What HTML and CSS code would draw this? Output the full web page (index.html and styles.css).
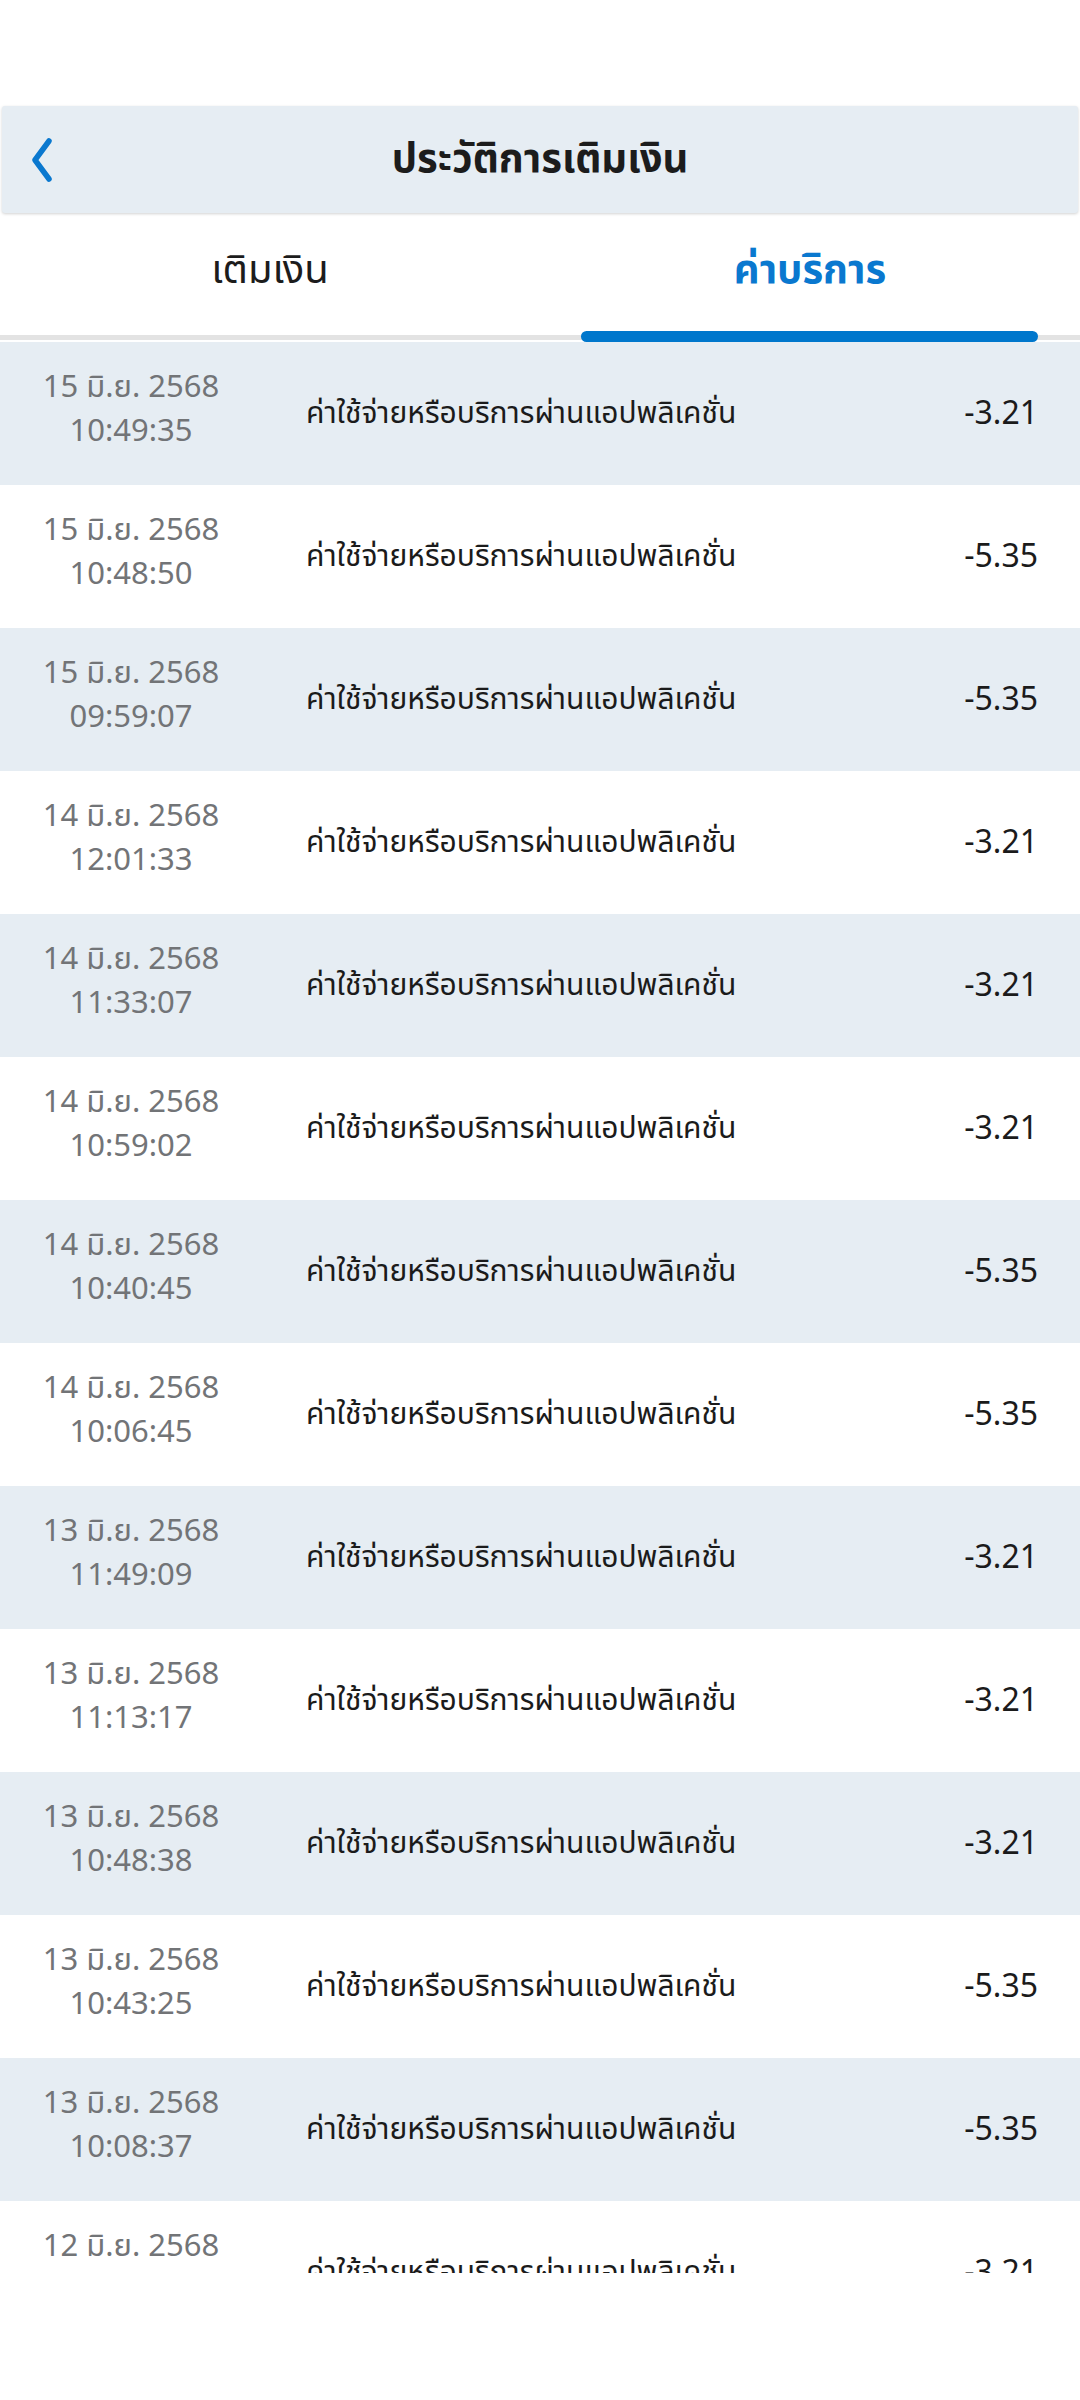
FILE: index.html
```html
<!DOCTYPE html>
<html lang="th">
<head>
<meta charset="utf-8">
<title>ประวัติการเติมเงิน</title>
<link rel="stylesheet" href="styles.css">
</head>
<body>
<div class="screen">
  <div class="statusbar"></div>
  <header class="appbar">
    <button class="back" aria-label="back">
      <svg width="24" height="44" viewBox="0 0 24 44"><path d="M19 3 L5 22 L19 41" fill="none" stroke="#0a78cf" stroke-width="5.5" stroke-linecap="round" stroke-linejoin="round"/></svg>
    </button>
    <h1 class="title">ประวัติการเติมเงิน</h1>
  </header>
  <nav class="tabs">
    <div class="tab">เติมเงิน</div>
    <div class="tab active">ค่าบริการ<span class="indicator"></span></div>
  </nav>
  <div class="list">
    <div class="row alt"><div class="when"><span>15 มิ.ย. 2568</span><span>10:49:35</span></div><div class="desc">ค่าใช้จ่ายหรือบริการผ่านแอปพลิเคชั่น</div><div class="amt">-3.21</div></div>
    <div class="row"><div class="when"><span>15 มิ.ย. 2568</span><span>10:48:50</span></div><div class="desc">ค่าใช้จ่ายหรือบริการผ่านแอปพลิเคชั่น</div><div class="amt">-5.35</div></div>
    <div class="row alt"><div class="when"><span>15 มิ.ย. 2568</span><span>09:59:07</span></div><div class="desc">ค่าใช้จ่ายหรือบริการผ่านแอปพลิเคชั่น</div><div class="amt">-5.35</div></div>
    <div class="row"><div class="when"><span>14 มิ.ย. 2568</span><span>12:01:33</span></div><div class="desc">ค่าใช้จ่ายหรือบริการผ่านแอปพลิเคชั่น</div><div class="amt">-3.21</div></div>
    <div class="row alt"><div class="when"><span>14 มิ.ย. 2568</span><span>11:33:07</span></div><div class="desc">ค่าใช้จ่ายหรือบริการผ่านแอปพลิเคชั่น</div><div class="amt">-3.21</div></div>
    <div class="row"><div class="when"><span>14 มิ.ย. 2568</span><span>10:59:02</span></div><div class="desc">ค่าใช้จ่ายหรือบริการผ่านแอปพลิเคชั่น</div><div class="amt">-3.21</div></div>
    <div class="row alt"><div class="when"><span>14 มิ.ย. 2568</span><span>10:40:45</span></div><div class="desc">ค่าใช้จ่ายหรือบริการผ่านแอปพลิเคชั่น</div><div class="amt">-5.35</div></div>
    <div class="row"><div class="when"><span>14 มิ.ย. 2568</span><span>10:06:45</span></div><div class="desc">ค่าใช้จ่ายหรือบริการผ่านแอปพลิเคชั่น</div><div class="amt">-5.35</div></div>
    <div class="row alt"><div class="when"><span>13 มิ.ย. 2568</span><span>11:49:09</span></div><div class="desc">ค่าใช้จ่ายหรือบริการผ่านแอปพลิเคชั่น</div><div class="amt">-3.21</div></div>
    <div class="row"><div class="when"><span>13 มิ.ย. 2568</span><span>11:13:17</span></div><div class="desc">ค่าใช้จ่ายหรือบริการผ่านแอปพลิเคชั่น</div><div class="amt">-3.21</div></div>
    <div class="row alt"><div class="when"><span>13 มิ.ย. 2568</span><span>10:48:38</span></div><div class="desc">ค่าใช้จ่ายหรือบริการผ่านแอปพลิเคชั่น</div><div class="amt">-3.21</div></div>
    <div class="row"><div class="when"><span>13 มิ.ย. 2568</span><span>10:43:25</span></div><div class="desc">ค่าใช้จ่ายหรือบริการผ่านแอปพลิเคชั่น</div><div class="amt">-5.35</div></div>
    <div class="row alt"><div class="when"><span>13 มิ.ย. 2568</span><span>10:08:37</span></div><div class="desc">ค่าใช้จ่ายหรือบริการผ่านแอปพลิเคชั่น</div><div class="amt">-5.35</div></div>
    <div class="row"><div class="when"><span>12 มิ.ย. 2568</span><span>11:52:14</span></div><div class="desc">ค่าใช้จ่ายหรือบริการผ่านแอปพลิเคชั่น</div><div class="amt">-3.21</div></div>
  </div>
</div>
</body>
</html>
```
FILE: styles.css
```css
* { box-sizing: border-box; }
html, body { margin: 0; padding: 0; background: #ffffff; }
body {
  font-family: "Noto Sans Thai", "Noto Sans Thai UI", "Noto Sans", sans-serif;
  color: #1b1b1b;
}
.screen { width: 1080px; height: 2400px; overflow: hidden; background: #fff; }
.statusbar { height: 106px; }
.appbar {
  height: 107px;
  margin: 0 2px;
  background: #e6edf3;
  border-radius: 3px;
  box-shadow: 0 1px 3px rgba(0,0,0,0.18);
  display: grid;
  grid-template-columns: 80px 1fr 80px;
  align-items: center;
}
.back {
  background: none; border: 0; padding: 0 0 0 28px; margin: 0;
  display: flex; align-items: center; height: 100%;
}
.back svg { display: block; }
.title {
  margin: 0;
  text-align: center;
  font-size: 40px;
  font-weight: 700;
  color: #1c1c1c;
}
.tabs {
  position: relative;
  display: grid;
  grid-template-columns: 1fr 1fr;
  height: 129px;
}
.tabs::after {
  content: "";
  position: absolute;
  left: 0; right: 0; bottom: 2px;
  height: 5px;
  background: #e3e3e3;
}
.tab {
  position: relative;
  display: flex;
  align-items: center;
  justify-content: center;
  padding-bottom: 14px;
  font-size: 40px;
  color: #1c1c1c;
}
.tab.active { color: #0a78cf; font-weight: 700; }
.indicator {
  position: absolute;
  left: 41px; right: 42px; bottom: 0;
  height: 11px;
  border-radius: 6px;
  background: #0077cc;
  z-index: 1;
}
.list { height: 1931px; overflow: hidden; }
.row {
  height: 143px;
  display: grid;
  grid-template-columns: 262px 1fr auto;
  column-gap: 44px;
  align-items: center;
  padding-right: 42px;
  background: #fff;
}
.row.alt { background: #e6edf3; }
.when {
  display: flex;
  flex-direction: column;
  align-items: center;
  font-size: 31px;
  line-height: 44px;
  color: #727477;
  margin-top: -7px;
}
.desc { font-size: 30px; color: #1b1b1b; }
.amt { font-size: 32px; color: #1b1b1b; text-align: right; }
```
